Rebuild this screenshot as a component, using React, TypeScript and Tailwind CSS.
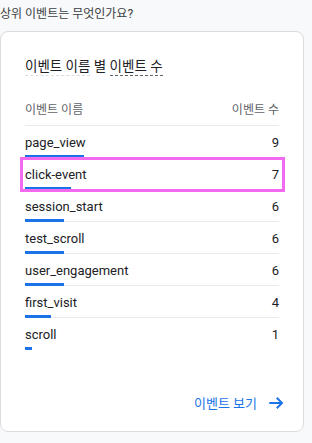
import React from "react";

const rows = [
  { name: "page_view", count: 9 },
  { name: "click-event", count: 7 },
  { name: "session_start", count: 6 },
  { name: "test_scroll", count: 6 },
  { name: "user_engagement", count: 6 },
  { name: "first_visit", count: 4 },
  { name: "scroll", count: 1 },
];

const font = { fontFamily: "Roboto, 'Noto Sans CJK KR', sans-serif" };

export default function App() {
  const max = 9;
  return (
    <div
      className="w-[312px] h-[443px] bg-[#f8f9fa] overflow-hidden text-[#202124]"
      style={font}
    >
      <div className="h-[31px] pt-[5px] text-[12px] leading-[18px] text-[#3c4043]">
        상위 이벤트는 무엇인가요?
      </div>
      <div className="w-[304px] h-[401px] bg-white border border-[#dadce0] rounded-lg px-6 flex flex-col">
        <div className="pt-[24px] h-[62px] text-[13.5px] leading-[20px] text-[#202124]">
          <span className="border-b border-dashed border-[#dadce0] pb-[1px]">이벤트 이름</span>{" "}
          별{" "}
          <span className="border-b border-dashed border-[#5f6368] pb-[1px]">이벤트 수</span>
        </div>
        <div className="flex justify-between items-end pb-[7px] h-[32px] text-[12px] leading-[16px] text-[#5f6368] border-b border-[#e8eaed]">
          <span>이벤트 이름</span>
          <span>이벤트 수</span>
        </div>
        {rows.map((r) => (
          <div key={r.name} className="relative h-[32px] flex flex-col">
            <div className="flex justify-between items-center h-[29px] pt-[5px] text-[13px] text-[#202124]">
              <span>{r.name}</span>
              <span>{r.count}</span>
            </div>
            <div className="flex items-end h-[3px]">
              <div className="h-[3px] bg-[#1a73e8]" style={{ width: `${(r.count / max) * 59}px` }} />
              {r.name !== "scroll" && <div className="flex-1 h-px bg-[#e8eaed]" />}
            </div>
            {r.name === "click-event" && (
              <div className="absolute -left-[5px] -right-[6px] -top-[1px] bottom-[-2px] border-[3px] border-[#f36af1]" />
            )}
          </div>
        ))}
        <div className="mt-auto mb-[18px] flex justify-end items-center gap-[10px] -mr-[6px] text-[#1a73e8] text-[13px]">
          <span>이벤트 보기</span>
          <svg width="18" height="18" viewBox="0 0 24 24" fill="none" stroke="#1a73e8" strokeWidth="2.6">
            <path d="M3 12h17M13 5l7 7-7 7" />
          </svg>
        </div>
      </div>
    </div>
  );
}
